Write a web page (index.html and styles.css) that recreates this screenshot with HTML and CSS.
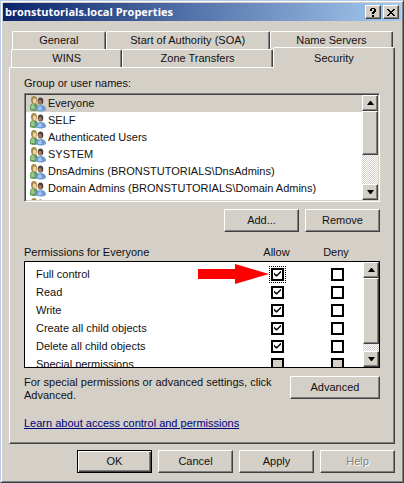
FILE: index.html
```html
<!DOCTYPE html>
<html lang="en">
<head>
<meta charset="utf-8">
<meta name="viewport" content="width=device-width, initial-scale=1">
<title>bronstutorials.local Properties</title>
<link rel="stylesheet" href="styles.css">
</head>
<body>
<svg class="defs" aria-hidden="true">
  <symbol id="users" viewBox="0 0 16 16">
    <path d="M0 14V10Q1 7 4 7T8 10V14Q4 16 0 14Z" fill="#5f9a56"/>
    <path d="M1 13V10Q2 8 4 8L5 13Z" fill="#9cc790"/>
    <ellipse cx="4" cy="4" rx="3" ry="4" fill="#a58a4c"/>
    <ellipse cx="4.600" cy="4.800" rx="1.800" ry="2.600" fill="#efd2a4"/>
    <path d="M6 14V12Q7 9 11 9T16 13V14Q11 17 6 14Z" fill="#6c9ad6"/>
    <path d="M8 14Q8 10 11 10L12 14Z" fill="#a6c8f0"/>
    <ellipse cx="10.500" cy="5" rx="2.800" ry="3.600" fill="#4a403e"/>
    <ellipse cx="10" cy="6.200" rx="1.800" ry="2.400" fill="#a97556"/>
  </symbol>
</svg>
<main class="window">
  <header class="titlebar">
    <h1>bronstutorials.local Properties</h1>
    <button class="caption" aria-label="Help"><svg viewBox="0 0 10 9" shape-rendering="crispEdges"><path d="M3 0h4v1h1v3H7v1H6v1H4V4h1V3h1V1H4v2H2V1h1zM4 7h2v2H4z"/></svg></button>
    <button class="caption" aria-label="Close"><svg viewBox="0 0 10 9" shape-rendering="crispEdges"><path d="M1 1h2v1h1v1h2V2h1V1h2v1H8v1H7v1H6v1h1v1h1v1h1v1H7V7H6V6H4v1H3v1H1V7h1V6h1V5h1V4H3V3H2V2H1z"/></svg></button>
  </header>
  <nav class="tabs" role="tablist">
    <div class="tabrow back">
      <button class="tab" role="tab">General</button>
      <button class="tab" role="tab">Start of Authority (SOA)</button>
      <button class="tab" role="tab">Name Servers</button>
    </div>
    <div class="tabrow front">
      <button class="tab" role="tab">WINS</button>
      <button class="tab" role="tab">Zone Transfers</button>
      <button class="tab active" role="tab" aria-selected="true">Security</button>
    </div>
  </nav>
  <section class="panel">
    <h2>Group or user names:</h2>
    <div class="listbox">
      <ul>
        <li class="selected"><svg><use href="#users"/></svg>Everyone</li>
        <li><svg><use href="#users"/></svg>SELF</li>
        <li><svg><use href="#users"/></svg>Authenticated Users</li>
        <li><svg><use href="#users"/></svg>SYSTEM</li>
        <li><svg><use href="#users"/></svg>DnsAdmins (BRONSTUTORIALS\DnsAdmins)</li>
        <li><svg><use href="#users"/></svg>Domain Admins (BRONSTUTORIALS\Domain Admins)</li>
        <li><svg><use href="#users"/></svg></li>
      </ul>
      <div class="scroll">
        <button aria-label="Scroll up"><svg viewBox="0 0 7 4"><path d="M3 0h1l3 4H0z"/></svg></button>
        <div class="thumb"></div>
        <button class="down" aria-label="Scroll down"><svg viewBox="0 0 7 4"><path d="M0 0h7L4 4H3z"/></svg></button>
      </div>
    </div>
    <div class="actions">
      <button class="btn">Add...</button>
      <button class="btn">Remove</button>
    </div>
    <div class="heads"><h2>Permissions for Everyone</h2><span>Allow</span><span>Deny</span></div>
    <div class="permbox">
      <table>
        <tr><th scope="row">Full control</th><td><span class="focus"><input type="checkbox" checked aria-label="Allow full control"></span><svg class="arrow" viewBox="0 0 71 20"><path d="M0 5h37V0l34 10-34 10v-5H0z"/></svg></td><td><input type="checkbox" aria-label="Deny full control"></td></tr>
        <tr><th scope="row">Read</th><td><input type="checkbox" checked aria-label="Allow read"></td><td><input type="checkbox" aria-label="Deny read"></td></tr>
        <tr><th scope="row">Write</th><td><input type="checkbox" checked aria-label="Allow write"></td><td><input type="checkbox" aria-label="Deny write"></td></tr>
        <tr><th scope="row">Create all child objects</th><td><input type="checkbox" checked aria-label="Allow create all child objects"></td><td><input type="checkbox" aria-label="Deny create all child objects"></td></tr>
        <tr><th scope="row">Delete all child objects</th><td><input type="checkbox" checked aria-label="Allow delete all child objects"></td><td><input type="checkbox" aria-label="Deny delete all child objects"></td></tr>
        <tr><th scope="row">Special permissions</th><td><input type="checkbox" disabled aria-label="Allow special permissions"></td><td><input type="checkbox" disabled aria-label="Deny special permissions"></td></tr>
      </table>
      <div class="scroll">
        <button aria-label="Scroll up"><svg viewBox="0 0 7 4"><path d="M3 0h1l3 4H0z"/></svg></button>
        <div class="thumb"></div>
        <button class="down" aria-label="Scroll down"><svg viewBox="0 0 7 4"><path d="M0 0h7L4 4H3z"/></svg></button>
      </div>
    </div>
    <div class="note">
      <p>For special permissions or advanced settings, click Advanced.</p>
      <button class="btn">Advanced</button>
    </div>
    <a href="#learn">Learn about access control and permissions</a>
  </section>
  <footer>
    <button class="btn default">OK</button>
    <button class="btn">Cancel</button>
    <button class="btn">Apply</button>
    <button class="btn" disabled>Help</button>
  </footer>
</main>
</body>
</html>
```
FILE: styles.css
```css
* { box-sizing: border-box; }
body {
  margin: 0;
  background: #d4d0c8;
  color: #111;
  font: 11px/13px "Liberation Sans", Arial, sans-serif;
}
h1, h2, p, ul { margin: 0; padding: 0; font: inherit; }
button { font: inherit; color: inherit; background: #d4d0c8; padding: 0; border-radius: 0; }
.defs { position: absolute; width: 0; height: 0; }
.window {
  min-height: 100vh;
  padding: 2px;
  border: 1px solid;
  border-color: #b5cbe5 #35414d #35414d #b5cbe5;
  box-shadow: inset 1px 1px #fff, inset -1px -1px #808080;
}
.titlebar {
  display: flex;
  align-items: center;
  gap: 2px;
  height: 18px;
  padding: 0 2px;
  background: linear-gradient(90deg, #0a246a, #a6caf0);
}
.titlebar h1 { flex: 1; font: bold 11px/18px "Open Sans", "Noto Sans", sans-serif; color: #fff; }
.caption { width: 16px; height: 14px; }
.caption, .scroll button, .thumb, .btn {
  border: 1px solid;
  border-color: #fff #404040 #404040 #fff;
  box-shadow: inset -1px -1px #808080;
}
.caption svg { display: block; width: 10px; height: 9px; margin: auto; }
.tabs { padding: 10px 8px 0; }
.tabrow { display: flex; height: 18px; }
.tab {
  border: 1px solid;
  border-color: #fff #404040 transparent #fff;
  border-bottom: 0;
  border-radius: 2px 2px 0 0;
  box-shadow: inset -1px 0 #808080;
}
.back { padding-left: 1px; }
.back .tab { flex: 93 1 0; }
.back .tab:nth-child(2) { flex-grow: 165; }
.back .tab:last-child { flex-grow: 123; }
.front .tab { flex: 111 1 0; }
.front .tab:nth-child(2) { flex-grow: 151; }
.front .active { position: relative; flex-grow: 122; height: 21px; margin: -2px -2px 0 0; }
.panel {
  display: flex;
  flex-direction: column;
  margin: 0 6px;
  padding: 9px 14px 13px;
  border: 1px solid;
  border-color: #fff #404040 #404040 #fff;
  box-shadow: inset -1px -1px #808080;
}
.listbox {
  display: flex;
  height: 109px;
  margin-top: 3px;
  padding: 1px;
  border: 1px solid;
  border-color: #808080 #fff #fff #808080;
  background: #fff;
  box-shadow: inset 1px 1px #404040, inset -1px -1px #d4d0c8;
}
ul { flex: 1; overflow: hidden; list-style: none; }
li { display: flex; align-items: center; gap: 2px; height: 17px; padding-left: 4px; }
li svg { width: 16px; height: 16px; }
.selected { background: #d4d0c8; }
.scroll {
  display: flex;
  flex-direction: column;
  width: 16px;
  background: repeating-conic-gradient(#fff 0 25%, #d4d0c8 0 50%) 0 0 / 2px 2px;
}
.scroll button { height: 16px; flex: none; }
.scroll svg { display: block; width: 7px; height: 4px; margin: auto; }
.scroll .down { margin-top: auto; }
.thumb { height: 44px; background: #d4d0c8; }
.btn { width: 75px; height: 23px; }
.actions { display: flex; justify-content: flex-end; gap: 6px; margin: 7px 0 14px; }
.heads { display: grid; grid-template-columns: 1fr 67px 52px 18px; }
.heads span { text-align: center; }
.permbox { display: flex; height: 107px; margin-top: 2px; border: 1px solid #000; background: #fff; }
.permbox table { flex: 1; display: block; overflow: hidden; border-spacing: 0; padding-top: 3px; }
.permbox tbody { display: block; }
.permbox tr { display: grid; grid-template-columns: 1fr 67px 52px; height: 18px; align-items: center; }
.permbox th { font-weight: normal; text-align: left; padding: 0 0 0 11px; }
.permbox td { display: grid; place-items: center; padding: 0; position: relative; }
.permbox .thumb { height: 66px; }
input {
  appearance: none;
  width: 13px;
  height: 13px;
  margin: 0;
  border: 2px solid #000;
  border-radius: 0;
  background: #fff;
}
input:disabled { background: #d4d0c8; }
input:checked { display: grid; place-items: center; }
input:checked::before {
  content: "";
  width: 7px;
  height: 7px;
  background: #000;
  clip-path: polygon(0 2px, 2px 4px, 3px 4px, 7px 0, 7px 2px, 3px 6px, 2px 6px, 0 4px);
}
.focus { display: grid; padding: 1px; border: 1px dotted #000; }
.arrow { position: absolute; right: 42px; width: 71px; height: 20px; fill: #f00; }
.note { display: flex; justify-content: space-between; margin-top: 8px; }
.note p { width: 250px; }
.note .btn { width: 90px; }
a { align-self: flex-start; color: #00007b; margin-top: 15px; }
footer { display: flex; justify-content: flex-end; gap: 6px; padding: 6px 6px 7px; }
.default { border-color: #000; box-shadow: inset 1px 1px #fff, inset -1px -1px #404040, inset -2px -2px #808080; }
.btn:disabled { color: #808080; text-shadow: 1px 1px #fff; }
```
